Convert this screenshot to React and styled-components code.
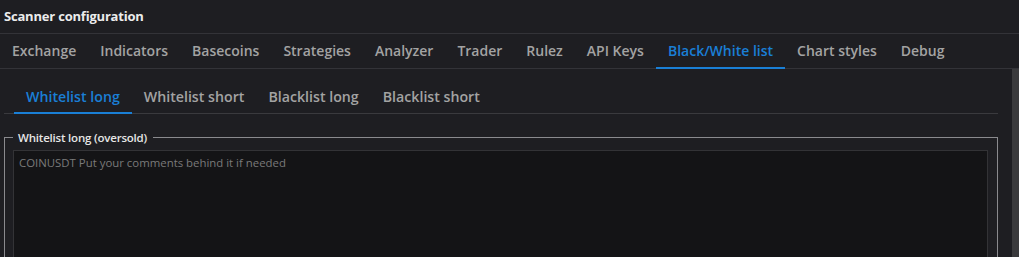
import React, { useState } from "react";
import styled, { createGlobalStyle } from "styled-components";

const Global = createGlobalStyle`
  html, body { margin: 0; padding: 0; background: #1e1e22; overflow: hidden; }
  body { font-family: "Open Sans", "Noto Sans", sans-serif; }
`;

const Page = styled.div`
  width: 1019px;
  height: 257px;
  display: flex;
  flex-direction: column;
  background: #1e1e22;
  overflow: hidden;
`;

const Header = styled.div`
  height: 34px;
  flex-shrink: 0;
  display: flex;
  align-items: center;
  padding: 0 0 2px 4px;
  box-sizing: border-box;
  border-bottom: 1px solid #333338;
  color: #ececec;
  font-size: 13px;
  font-weight: 700;
  letter-spacing: -0.2px;
`;

const TabBar = styled.div`
  height: 35px;
  flex-shrink: 0;
  display: flex;
  box-sizing: border-box;
  border-bottom: 1px solid #333338;
`;

const Tab = styled.div`
  padding: 0 12px;
  display: flex;
  align-items: center;
  font-size: 14px;
  font-weight: 600;
  color: ${(p) => (p.$active ? "#1a7fd6" : "#a3a3a3")};
  border-bottom: 2px solid ${(p) => (p.$active ? "#1a7fd6" : "transparent")};
  margin-bottom: -1px;
  box-sizing: border-box;
`;

const Body = styled.div`
  flex: 1;
  display: flex;
  min-height: 0;
`;

const Content = styled.div`
  flex: 1;
  padding: 0 14px 0 4px;
  display: flex;
  flex-direction: column;
  min-width: 0;
`;

const Scrollbar = styled.div`
  width: 7px;
  background: #3a3a3c;
`;

const SubTabBar = styled.div`
  flex-shrink: 0;
  margin-top: 10px;
  height: 35px;
  display: flex;
  padding-left: 10px;
  border-bottom: 1px solid #3a3a3e;
  box-sizing: border-box;
`;

const SubTab = styled(Tab)`
  font-size: 14.2px;
  padding-top: 1px;
`;

const Fieldset = styled.fieldset`
  flex-shrink: 0;
  margin: 16px 0 0 0;
  padding: 5px 9px 10px 8px;
  border: 1px solid #8a8a8e;
  min-width: 0;
`;

const Legend = styled.legend`
  padding: 0 6px 0 5px;
  color: #e6e6e6;
  font-size: 11.5px;
  font-weight: 600;
  letter-spacing: -0.2px;
`;

const TextArea = styled.textarea`
  display: block;
  width: 100%;
  height: 200px;
  box-sizing: border-box;
  background: #141416;
  border: 1px solid #333336;
  color: #ddd;
  padding: 4px 5px;
  font-family: "Open Sans", "Noto Sans", sans-serif;
  font-size: 11.4px;
  resize: none;
  outline: none;
  &::placeholder { color: #7a7a7a; }
`;

const mainTabs = ["Exchange", "Indicators", "Basecoins", "Strategies", "Analyzer", "Trader", "Rulez", "API Keys", "Black/White list", "Chart styles", "Debug"];
const subTabs = ["Whitelist long", "Whitelist short", "Blacklist long", "Blacklist short"];

export default function App() {
  const [tab] = useState("Black/White list");
  const [sub] = useState("Whitelist long");
  return (
    <Page>
      <Global />
      <Header>Scanner configuration</Header>
      <TabBar>
        {mainTabs.map((t) => (
          <Tab key={t} $active={t === tab}>{t}</Tab>
        ))}
      </TabBar>
      <Body>
        <Content>
          <SubTabBar>
            {subTabs.map((t) => (
              <SubTab key={t} $active={t === sub}>{t}</SubTab>
            ))}
          </SubTabBar>
          <Fieldset>
            <Legend>Whitelist long (oversold)</Legend>
            <TextArea placeholder="COINUSDT Put your comments behind it if needed" />
          </Fieldset>
        </Content>
        <Scrollbar />
      </Body>
    </Page>
  );
}
